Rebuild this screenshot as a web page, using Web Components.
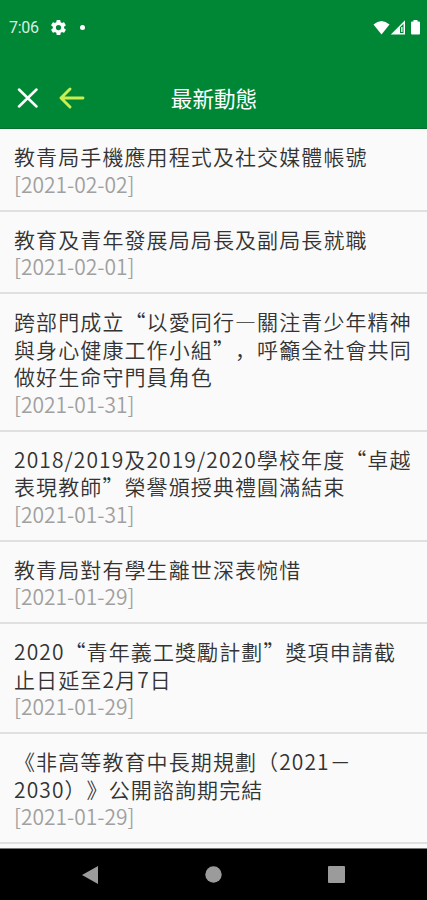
<!DOCTYPE html>
<html lang="zh-Hans">
<head>
<meta charset="utf-8">
<meta name="viewport" content="width=device-width, initial-scale=1">
<title>最新動態</title>
<style>
    body {
        margin: 0;
        background-color: #fafafa;
        font-family: "Noto Sans CJK SC", "Noto Sans CJK TC", sans-serif;
    }
</style>
</head>
<body>
<news-app>
    <status-bar time="7:06"></status-bar>
    <app-header>最新動態</app-header>
    <news-list>
        <news-item date="2021-02-02">教青局手機應用程式及社交媒體帳號</news-item>
        <news-item date="2021-02-01">教育及青年發展局局長及副局長就職</news-item>
        <news-item date="2021-01-31">跨部門成立“以愛同行—關注青少年精神與身心健康工作小組”，呼籲全社會共同做好生命守門員角色</news-item>
        <news-item date="2021-01-31">2018/2019及2019/2020學校年度“卓越表現教師”榮譽頒授典禮圓滿結束</news-item>
        <news-item date="2021-01-29">教青局對有學生離世深表惋惜</news-item>
        <news-item date="2021-01-29">2020“青年義工獎勵計劃”獎項申請截止日延至2月7日</news-item>
        <news-item date="2021-01-29">《非高等教育中長期規劃（2021－2030）》公開諮詢期完結</news-item>
    </news-list>
    <system-nav></system-nav>
</news-app>

<script>
class NewsApp extends HTMLElement {
    connectedCallback() {
        this.attachShadow({ mode: 'open' });
        this.shadowRoot.innerHTML = `
            <style>
                :host {
                    display: flex;
                    flex-direction: column;
                    height: 900px;
                    overflow: hidden;
                }
            </style>
            <slot></slot>
        `;
    }
}

class StatusBar extends HTMLElement {
    connectedCallback() {
        this.attachShadow({ mode: 'open' });
        this.shadowRoot.innerHTML = `
            <style>
                :host {
                    display: flex;
                    flex: none;
                    align-items: center;
                    box-sizing: border-box;
                    height: 55px;
                    padding: 0 7px 0 9px;
                    background-color: #008736;
                    color: #d9eee0;
                    font: 16px/20px Roboto, sans-serif;
                }

                .time {
                    width: 42px;
                    letter-spacing: -0.3px;
                }

                .dot {
                    width: 5px;
                    height: 5px;
                    margin-left: 14px;
                    border-radius: 50%;
                    background-color: #fff;
                }

                .right {
                    display: flex;
                    align-items: center;
                    margin-left: auto;
                }

                svg {
                    display: block;
                }
            </style>
            <span class="time">${this.getAttribute('time')}</span>
            <svg width="15" height="15" viewBox="2 2 20 20" fill="#fff">
                <path d="M19.4 13a7.5 7.5 0 0 0 0-2l2.1-1.6a.5.5 0 0 0 .1-.7l-2-3.4a.5.5 0 0 0-.6-.2l-2.5 1a7.3 7.3 0 0 0-1.7-1l-.4-2.65A.5.5 0 0 0 14 2h-4a.5.5 0 0 0-.5.45L9.1 5.1a7.7 7.7 0 0 0-1.7 1l-2.5-1a.5.5 0 0 0-.6.2l-2 3.4a.5.5 0 0 0 .1.7L4.5 11a7.9 7.9 0 0 0 0 2l-2.1 1.6a.5.5 0 0 0-.1.7l2 3.4c.1.2.4.3.6.2l2.5-1a7.3 7.3 0 0 0 1.7 1l.4 2.65c0 .25.25.45.5.45h4c.25 0 .45-.2.5-.45l.4-2.65a7.7 7.7 0 0 0 1.7-1l2.5 1c.2.1.5 0 .6-.2l2-3.4a.5.5 0 0 0-.1-.7zM12 15.5a3.5 3.5 0 1 1 0-7 3.5 3.5 0 0 1 0 7z" fill-rule="evenodd"/>
            </svg>
            <span class="dot"></span>
            <span class="right">
                <svg width="17" height="15" viewBox="0 0 17 15" fill="#fff"><path d="M.5 4.5Q8.500-2.500 16.500 4.500L8.500 14.500z"/></svg>
                <svg width="16" height="15" viewBox="0 0 16 15" fill="#fff"><path fill-rule="evenodd" d="M.8 14.500L15 .3v14.200zM10 7.300v5.700h3.500V3.800z"/><path d="M11.200 7h1.300v5h-1.300z"/></svg>
                <svg style="margin-left: 5px" width="9" height="15" viewBox="0 0 9 15" fill="#fff"><path d="M2.500 0h4v1.500H8a1 1 0 0 1 1 1V13.500a1 1 0 0 1-1 1H1a1 1 0 0 1-1-1V2.500a1 1 0 0 1 1-1h1.500z"/></svg>
            </span>
        `;
    }
}

class AppHeader extends HTMLElement {
    connectedCallback() {
        this.attachShadow({ mode: 'open' });
        this.shadowRoot.innerHTML = `
            <style>
                :host {
                    display: grid;
                    flex: none;
                    grid-template-columns: 100px 1fr 100px;
                    align-items: center;
                    box-sizing: border-box;
                    height: 74px;
                    padding-top: 12px;
                    border-bottom: 1px solid #08702f;
                    background-color: #008736;
                    color: #fff;
                }

                .actions {
                    display: flex;
                    gap: 20px;
                    padding-left: 17px;
                }

                .title {
                    padding-left: 1px;
                    text-align: center;
                    font-size: 21.6px;
                    line-height: 30px;
                }

                svg {
                    display: block;
                    fill: none;
                    stroke-width: 2.5;
                    stroke-linecap: round;
                    stroke-linejoin: round;
                }
            </style>
            <div class="actions">
                <svg width="21" height="22" viewBox="0 0 21 22" stroke="#fff"><path d="M2 2.5L19.5 19.5M19.5 2.5L2 19.5"/></svg>
                <svg width="27" height="22" viewBox="0 0 27 22" stroke="#c8ee50" style="stroke-width: 2.9"><path d="M12 2L3 11L12 20M3 11H25"/></svg>
            </div>
            <div class="title"><slot></slot></div>
        `;
    }
}

class NewsList extends HTMLElement {
    connectedCallback() {
        this.attachShadow({ mode: 'open' });
        this.shadowRoot.innerHTML = `
            <style>
                :host {
                    display: block;
                    flex: 1;
                    min-height: 0;
                    overflow: hidden;
                    background-color: #fafafa;
                }
            </style>
            <slot></slot>
        `;
    }
}

class NewsItem extends HTMLElement {
    connectedCallback() {
        this.attachShadow({ mode: 'open' });
        this.shadowRoot.innerHTML = `
            <style>
                :host {
                    display: block;
                    padding: 14px 11px 11.5px 14px;
                    border-bottom: 2px solid #e0e0e0;
                    font-size: 21px;
                    font-weight: 350;
                    line-height: 27.5px;
                    text-spacing-trim: space-all;
                }

                .title {
                    color: #333;
                    letter-spacing: 1.1px;
                }

                .date {
                    color: #a0a0a0;
                }
            </style>
            <div class="title"><slot></slot></div>
            <div class="date">[${this.getAttribute('date')}]</div>
        `;
    }
}

class SystemNav extends HTMLElement {
    connectedCallback() {
        this.attachShadow({ mode: 'open' });
        this.shadowRoot.innerHTML = `
            <style>
                :host {
                    display: flex;
                    flex: none;
                    justify-content: center;
                    align-items: center;
                    gap: 106px;
                    box-sizing: border-box;
                    height: 52px;
                    border-top: 1px solid #777;
                    background-color: #000;
                }

                svg {
                    display: block;
                    fill: #9b9b9b;
                }
            </style>
            <svg width="17" height="18" viewBox="0 0 17 18"><path d="M0 9L16 0V18z"/></svg>
            <svg width="17" height="17" viewBox="0 0 17 17"><circle cx="8.5" cy="8.5" r="8.2"/></svg>
            <svg width="17" height="17" viewBox="0 0 17 17"><rect width="17" height="17" rx="1"/></svg>
        `;
    }
}

customElements.define('news-app', NewsApp);
customElements.define('status-bar', StatusBar);
customElements.define('app-header', AppHeader);
customElements.define('news-list', NewsList);
customElements.define('news-item', NewsItem);
customElements.define('system-nav', SystemNav);
</script>
</body>
</html>
